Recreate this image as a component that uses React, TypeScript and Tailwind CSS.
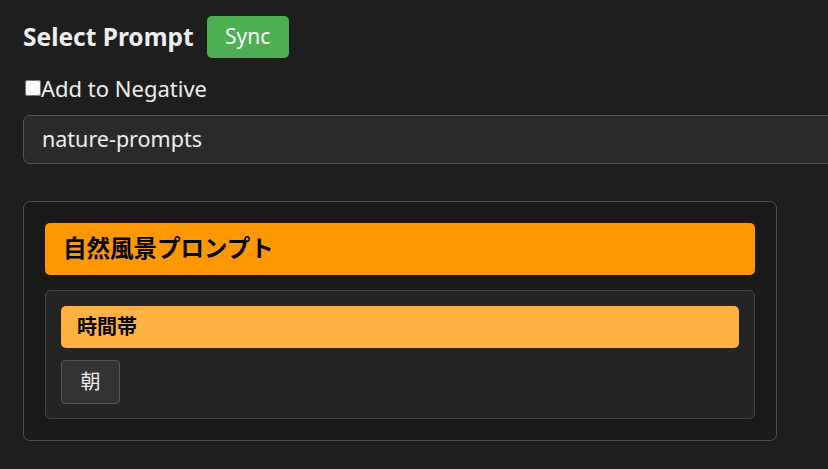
import React, { useState } from 'react';

const font = { fontFamily: '"Noto Sans", "Noto Sans CJK JP", sans-serif' };

const App = () => {
  const [negative, setNegative] = useState(false);
  const [selected, setSelected] = useState('nature-prompts');

  return (
    <div className="min-h-[469px] w-[828px] overflow-hidden bg-[#1e1e1e] pl-[23px] pt-4 text-[#eeeeee]" style={font}>
      {/* Header */}
      <div className="flex items-center gap-[13px]">
        <h2 className="text-[24.5px] font-bold leading-none text-[#eeeeee]">Select Prompt</h2>
        <button className="h-[42px] w-[82px] rounded-[5px] bg-[#4caf50] text-[21px] text-white">Sync</button>
      </div>

      {/* Negative toggle */}
      <label className="mt-[18px] flex h-6 items-center text-[22px] leading-none">
        <input
          type="checkbox"
          checked={negative}
          onChange={(e) => setNegative(e.target.checked)}
          className="m-0 ml-[2px] h-4 w-4"
        />
        <span>Add to Negative</span>
      </label>

      {/* Prompt file select */}
      <div className="mt-[15px] flex h-[49px] w-[830px] items-center rounded-[7px] border border-[#555555] bg-[#2a2a2a] pl-[18px] text-[21.5px]">
        {selected}
      </div>

      {/* Prompt tree */}
      <div className="mt-[37px] w-[754px] rounded-[7px] border border-[#505050] bg-[#1a1a1a] p-[21px]">
        <div className="flex h-[52px] items-center rounded-[5px] bg-[#ff9800] pl-[18px] text-[23.5px] font-bold text-black">
          自然風景プロンプト
        </div>

        <div className="mt-[15px] rounded-[6px] border border-[#444444] bg-[#242424] px-[15px] pb-[14px] pt-[15px]">
          <div className="flex h-[42px] items-center rounded-[5px] bg-[#ffb142] pl-4 text-[20px] font-bold text-black">
            時間帯
          </div>
          <div className="mt-3 flex gap-2">
            <button
              onClick={() => setSelected(selected)}
              className="h-[44px] w-[59px] rounded-[4px] border border-[#555555] bg-[#333333] text-[20px] text-[#eeeeee]"
            >
              朝
            </button>
          </div>
        </div>
      </div>
    </div>
  );
};

export default App;
